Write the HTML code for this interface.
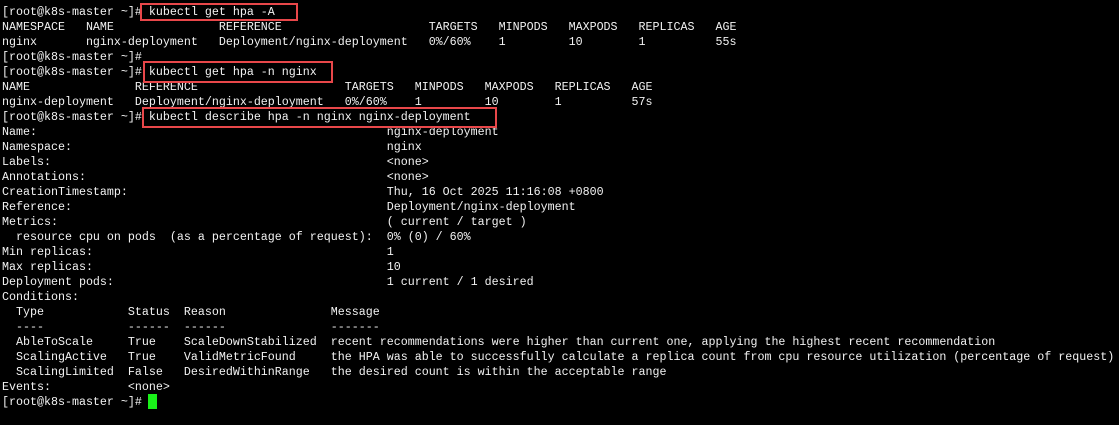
<!DOCTYPE html>
<html><head><style>
html,body{margin:0;padding:0;background:#000;width:1119px;height:425px;overflow:hidden}
pre{position:absolute;left:2px;top:5px;margin:0;font-family:"Liberation Mono",monospace;font-size:11.67px;line-height:15px;color:#f2f2f2;white-space:pre}
.b{position:absolute;border:2px solid #e8474a;box-sizing:border-box}
.c{position:absolute;left:148px;top:394px;width:9px;height:15px;background:#19f019}
</style></head><body>
<pre>[root@k8s-master ~]# kubectl get hpa -A
NAMESPACE   NAME               REFERENCE                     TARGETS   MINPODS   MAXPODS   REPLICAS   AGE
nginx       nginx-deployment   Deployment/nginx-deployment   0%/60%    1         10        1          55s
[root@k8s-master ~]#
[root@k8s-master ~]# kubectl get hpa -n nginx
NAME               REFERENCE                     TARGETS   MINPODS   MAXPODS   REPLICAS   AGE
nginx-deployment   Deployment/nginx-deployment   0%/60%    1         10        1          57s
[root@k8s-master ~]# kubectl describe hpa -n nginx nginx-deployment
Name:                                                  nginx-deployment
Namespace:                                             nginx
Labels:                                                &lt;none&gt;
Annotations:                                           &lt;none&gt;
CreationTimestamp:                                     Thu, 16 Oct 2025 11:16:08 +0800
Reference:                                             Deployment/nginx-deployment
Metrics:                                               ( current / target )
  resource cpu on pods  (as a percentage of request):  0% (0) / 60%
Min replicas:                                          1
Max replicas:                                          10
Deployment pods:                                       1 current / 1 desired
Conditions:
  Type            Status  Reason               Message
  ----            ------  ------               -------
  AbleToScale     True    ScaleDownStabilized  recent recommendations were higher than current one, applying the highest recent recommendation
  ScalingActive   True    ValidMetricFound     the HPA was able to successfully calculate a replica count from cpu resource utilization (percentage of request)
  ScalingLimited  False   DesiredWithinRange   the desired count is within the acceptable range
Events:           &lt;none&gt;
[root@k8s-master ~]# </pre>
<div class="b" style="left:140px;top:3px;width:158px;height:18px"></div>
<div class="b" style="left:143px;top:61px;width:190px;height:22px"></div>
<div class="b" style="left:142px;top:107px;width:355px;height:21px"></div>
<div class="c"></div>
</body></html>
